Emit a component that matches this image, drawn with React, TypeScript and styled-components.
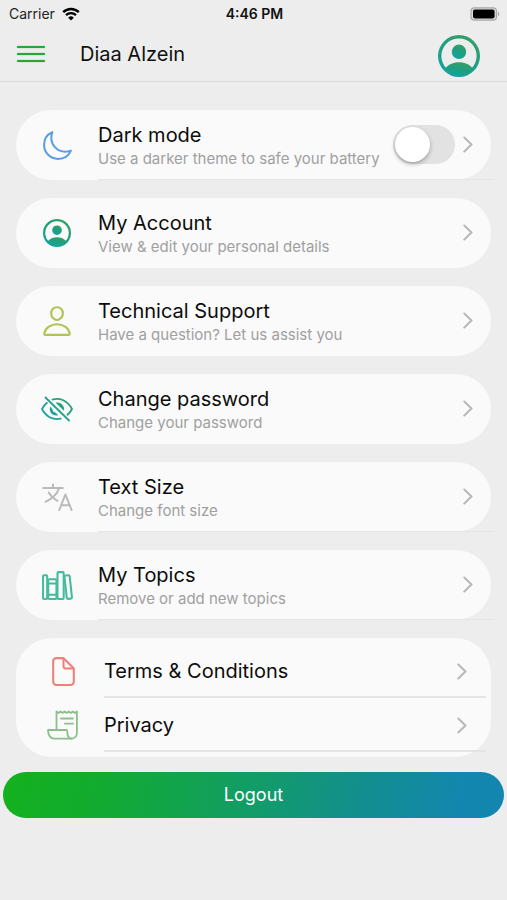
import React, { useState } from "react";
import styled, { createGlobalStyle, css } from "styled-components";
import { IoDocumentOutline, IoLibraryOutline, IoMoonOutline, IoPersonOutline } from "react-icons/io5";

const GlobalStyle = createGlobalStyle`
  * { box-sizing: border-box; }
  body {
    margin: 0;
    background: #ededed;
    font-family: Inter, "Liberation Sans", sans-serif;
    color: #111;
  }
  button { font: inherit; color: inherit; border: 0; background: none; padding: 0; cursor: pointer; }
`;

const Screen = styled.div`
  min-height: 100vh;
  background: #ededed;
`;

const StatusBar = styled.div`
  display: grid;
  grid-template-columns: 1fr auto 1fr;
  align-items: center;
  height: 27px;
  padding: 0 7px 0 9px;
`;

const Carrier = styled.span`
  display: flex;
  align-items: center;
  gap: 7px;
  font-size: 14px;
  line-height: 16px;
  color: #222;
`;

const Clock = styled.time`
  font-size: 14px;
  line-height: 16px;
  font-weight: 600;
`;

const BatterySlot = styled.span`
  display: flex;
  justify-content: flex-end;
`;

const Header = styled.header`
  display: flex;
  align-items: center;
  height: 55px;
  padding: 0 27px 0 17px;
  border-bottom: 1px solid #d9d9d9;
`;

const MenuButton = styled.button`
  display: flex;
  flex-direction: column;
  gap: 5px;
  width: 28px;
`;

const MenuBar = styled.span`
  height: 2px;
  border-radius: 1px;
  background: #2aa637;
  box-shadow: 0 0 1px #2aa637;
`;

const UserName = styled.h1`
  flex: 1;
  margin: 0 0 0 35px;
  font-size: 20px;
  line-height: 24px;
  font-weight: 400;
`;

const AvatarButton = styled.button`
  display: flex;
  padding-top: 4px;
`;

const Settings = styled.ul`
  display: flex;
  flex-direction: column;
  gap: 18px;
  list-style: none;
  margin: 0;
  padding: 28px 16px 15px;
`;

const Card = styled.li`
  border-radius: 36px;
  background: #fafafa;
`;

const rowLayout = css`
  display: flex;
  align-items: stretch;
  width: 100%;
  text-align: left;
`;

const Row = styled.button`
  ${rowLayout}
  height: 70px;
`;

const SwitchRow = styled.div`
  ${rowLayout}
  height: 70px;
`;

const IconSlot = styled.span`
  display: flex;
  align-items: center;
  justify-content: center;
  flex: none;
  width: 82px;
`;

const RowBody = styled.span<{ $line?: boolean }>`
  display: flex;
  align-items: center;
  flex: 1;
  min-width: 0;
  margin-right: ${(p) => (p.$line ? "-2px" : "0")};
  padding-right: ${(p) => (p.$line ? "20px" : "18px")};
  border-bottom: 1px solid ${(p) => (p.$line ? "#e4e4e4" : "transparent")};
`;

const Labels = styled.span`
  display: flex;
  flex-direction: column;
  gap: 2px;
  flex: 1;
  min-width: 0;
  padding-top: 2px;
`;

const Title = styled.span`
  font-size: 20px;
  line-height: 24px;
  color: #0c0c0c;
  white-space: nowrap;
`;

const Subtitle = styled.span`
  font-size: 15px;
  line-height: 20px;
  color: #a0a0a0;
  white-space: nowrap;
`;

const Switch = styled.input`
  appearance: none;
  flex: none;
  width: 62px;
  height: 39px;
  margin: 0 8px 0 0;
  padding: 2px;
  border-radius: 20px;
  background: #e2e2e2;
  cursor: pointer;

  &::before {
    content: "";
    display: block;
    width: 35px;
    height: 35px;
    border-radius: 50%;
    background: #fff;
    box-shadow: 0 2px 4px rgba(0, 0, 0, 0.3);
  }
  &:checked { background: #2aa637; }
  &:checked::before { margin-left: 23px; }
`;

const ChevronButton = styled.button`
  display: flex;
`;

const LegalCard = styled(Card)`
  padding: 6px 5px 5px 6px;
`;

const LegalRow = styled.a`
  ${rowLayout}
  height: 54px;
  color: inherit;
  text-decoration: none;
`;

const LegalBody = styled.span`
  display: flex;
  align-items: center;
  justify-content: space-between;
  flex: 1;
  padding: 2px 19px 0 0;
  border-bottom: 2px solid #e4e4e4;
`;

const Logout = styled.button`
  display: block;
  width: calc(100% - 6px);
  height: 46px;
  margin: 0 3px;
  border-radius: 23px;
  background: linear-gradient(100deg, #14b11e 0%, #12ab30 20%, #129c68 50%, #128e90 72%, #1386b0 92%);
  color: #fff;
  font-size: 18px;
  line-height: 24px;
`;

function Wifi() {
  return (
    <svg width="18" height="14" viewBox="0 0 18 14" fill="none" aria-hidden="true">
      <path d="M1.2 5.2a11 11 0 0 1 15.6 0" stroke="#000" strokeWidth="2.4" />
      <path d="M4 8.2a7.2 7.2 0 0 1 10 0" stroke="#000" strokeWidth="2.3" />
      <path d="M9 13.6 6.2 10.7a4 4 0 0 1 5.6 0Z" fill="#000" />
    </svg>
  );
}

function Battery() {
  return (
    <svg width="30" height="14" viewBox="0 0 30 14" aria-hidden="true">
      <rect x="1" y="0.8" width="25.5" height="12.4" rx="3.4" fill="#ddd" stroke="#a8a8a8" strokeWidth="1.2" />
      <rect x="3" y="2.6" width="21.6" height="8.8" rx="1.8" fill="#000" />
      <path d="M28 4.8c1.8.7 1.8 3.7 0 4.4Z" fill="#a8a8a8" />
    </svg>
  );
}

function Avatar({ size, id }: { size: number; id: string }) {
  return (
    <svg width={size} height={size} viewBox="0 0 42 42" aria-hidden="true">
      <defs>
        <linearGradient id={id} x1="0.8" y1="0" x2="0.3" y2="1">
          <stop offset="0" stopColor="#36a064" />
          <stop offset="0.5" stopColor="#1f9f80" />
          <stop offset="1" stopColor="#10a5a5" />
        </linearGradient>
        <clipPath id={`${id}-clip`}>
          <circle cx="21" cy="21" r="20" />
        </clipPath>
      </defs>
      <g fill={`url(#${id})`}>
        <path
          fillRule="evenodd"
          d="M21 0a21 21 0 1 0 0 42a21 21 0 1 0 0-42ZM21 3.400a17.600 17.600 0 1 1 0 35.200a17.600 17.600 0 1 1 0-35.200Z"
        />
        <circle cx="21" cy="16.8" r="7.2" />
        <path clipPath={`url(#${id}-clip)`} d="M7 33.5C10 29.5 15 27.2 21 27.2s11 2.3 14 6.3L33 38 21 42 9 38Z" />
      </g>
    </svg>
  );
}

function EyeOff() {
  return (
    <svg width="32" height="26" viewBox="0 0 32 26" fill="none" aria-hidden="true">
      <defs>
        <linearGradient id="eye" x1="28" y1="2" x2="8" y2="24" gradientUnits="userSpaceOnUse">
          <stop offset="0" stopColor="#2f9f68" />
          <stop offset="1" stopColor="#16a6a6" />
        </linearGradient>
      </defs>
      <g stroke="url(#eye)" strokeWidth="1.8" strokeLinecap="round" strokeLinejoin="round">
        <path d="M4.500 1.500 28 24.500" />
        <path d="M11.500 3.600C18.500 1.400 26.500 4.300 31 13c-1.200 2.300-2.700 4.200-4.500 5.700" />
        <path d="M5.900 6.800C3.900 8.500 2.300 10.600 1 13c4.300 8.200 11.600 11.300 18.700 9.600" />
      </g>
      <g fill="url(#eye)">
        <path d="M9.200 10.400c-1.800 5.600 2.400 10.200 8 8.800l-2.400-2.400c-2-.4-3.200-1.600-3.500-3.700Z" />
        <path d="M14.600 6.700c5-1.200 9.400 2.800 8.300 8.100Z" />
      </g>
    </svg>
  );
}

function Translate() {
  return (
    <svg width="31" height="28" viewBox="0 0 31 28" fill="none" stroke="#bababa" strokeWidth="2" strokeLinecap="round" aria-hidden="true">
      <path d="M1.200 5h19.600M11 1.400V5" />
      <path d="M17 5c-1.500 5.500-6.500 10.500-13.500 13.800M6.800 9.500c1.800 3.300 4.700 6 8.700 8.300" />
      <path d="m17.200 27 6.200-15.500L29.600 27M19.400 22.300h8" strokeLinejoin="round" />
    </svg>
  );
}

function Scroll() {
  return (
    <svg width="32" height="32" viewBox="0 0 32 32" fill="none" stroke="#8cc08a" strokeWidth="1.8" strokeLinejoin="round" strokeLinecap="round" aria-hidden="true">
      <path d="M9.500 20.500V2.500l2 1.400 2-1.400 2.100 1.400 2-1.400 2.100 1.400 2-1.400 2.100 1.400 2-1.400 2.100 1.400 2-1.400V24c0 3.400-2.600 5.700-5.800 5.700" />
      <path d="M1 21h18.500c.6 0 .7.400.7.800 0 4.200 1.100 7.900 4.400 7.900H7.500C3.500 29.700 1 26.500 1 21Z" />
      <path d="M14 9.500h12M18 14.700h8" />
    </svg>
  );
}

function Chevron() {
  return (
    <svg width="10" height="17" viewBox="0 0 10 17" fill="none" aria-hidden="true">
      <path d="M1.300 1.500 8.500 8.500 1.300 15.500" stroke="#b9b9b9" strokeWidth="2.100" strokeLinecap="round" strokeLinejoin="round" />
    </svg>
  );
}

interface Item {
  title: string;
  subtitle: string;
  icon: React.ReactNode;
  line?: boolean;
}

const items: Item[] = [
  { title: "My Account", subtitle: "View & edit your personal details", icon: <Avatar size={28} id="account" /> },
  { title: "Technical Support", subtitle: "Have a question? Let us assist you", icon: <IoPersonOutline size={34} color="#b0c452" /> },
  { title: "Change password", subtitle: "Change your password", icon: <EyeOff /> },
  { title: "Text Size", subtitle: "Change font size", icon: <Translate />, line: true },
  { title: "My Topics", subtitle: "Remove or add new topics", icon: <IoLibraryOutline size={33} color="#45bb9e" />, line: true },
];

const legal = [
  { title: "Terms & Conditions", href: "#terms", icon: <IoDocumentOutline size={33} color="#ee8078" /> },
  { title: "Privacy", href: "#privacy", icon: <Scroll /> },
];

export default function App() {
  const [dark, setDark] = useState(false);
  return (
    <Screen>
      <GlobalStyle />
      <StatusBar>
        <Carrier>Carrier <Wifi /></Carrier>
        <Clock>4:46 PM</Clock>
        <BatterySlot><Battery /></BatterySlot>
      </StatusBar>
      <Header>
        <MenuButton aria-label="Menu"><MenuBar /><MenuBar /><MenuBar /></MenuButton>
        <UserName>Diaa Alzein</UserName>
        <AvatarButton aria-label="Profile"><Avatar size={42} id="profile" /></AvatarButton>
      </Header>
      <main>
        <Settings>
          <Card>
            <SwitchRow>
              <IconSlot><IoMoonOutline size={33} color="#5a9de6" /></IconSlot>
              <RowBody $line>
                <Labels as="label" htmlFor="dark-mode">
                  <Title>Dark mode</Title>
                  <Subtitle>Use a darker theme to safe your battery</Subtitle>
                </Labels>
                <Switch id="dark-mode" type="checkbox" role="switch" checked={dark} onChange={(e) => setDark(e.target.checked)} />
                <ChevronButton aria-label="Dark mode options"><Chevron /></ChevronButton>
              </RowBody>
            </SwitchRow>
          </Card>
          {items.map((item) => (
            <Card key={item.title}>
              <Row>
                <IconSlot>{item.icon}</IconSlot>
                <RowBody $line={item.line}>
                  <Labels>
                    <Title>{item.title}</Title>
                    <Subtitle>{item.subtitle}</Subtitle>
                  </Labels>
                  <Chevron />
                </RowBody>
              </Row>
            </Card>
          ))}
          <LegalCard>
            {legal.map((item) => (
              <LegalRow key={item.title} href={item.href}>
                <IconSlot>{item.icon}</IconSlot>
                <LegalBody>
                  <Title>{item.title}</Title>
                  <Chevron />
                </LegalBody>
              </LegalRow>
            ))}
          </LegalCard>
        </Settings>
        <Logout>Logout</Logout>
      </main>
    </Screen>
  );
}
